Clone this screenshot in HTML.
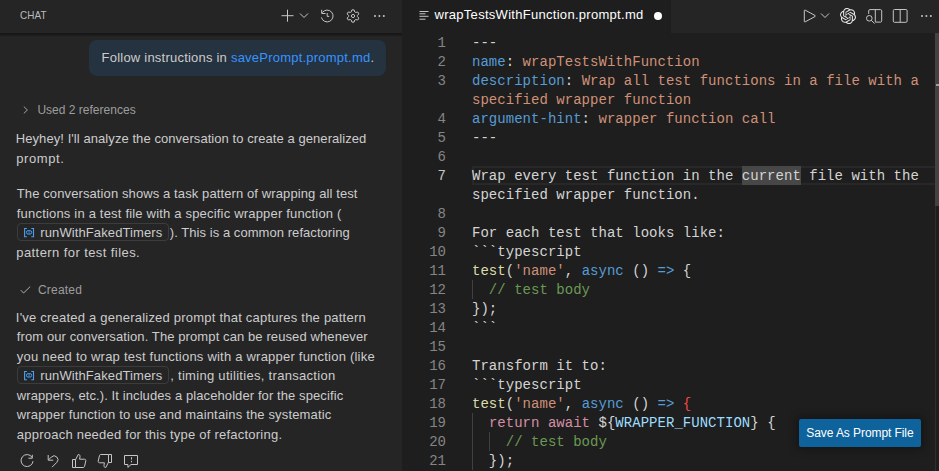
<!DOCTYPE html>
<html><head><meta charset="utf-8"><style>
*{margin:0;padding:0;box-sizing:border-box}
html,body{width:939px;height:471px;overflow:hidden;background:#1e1e1e}
.t{position:absolute;white-space:pre}
#chat{position:absolute;left:0;top:0;width:402px;height:471px;background:#252526}
#chatshadow{position:absolute;left:0;top:33px;width:402px;height:4px;background:linear-gradient(#161616 0%,#191919 45%,rgba(30,30,30,0) 100%)}
#bubble{position:absolute;left:89px;top:40px;width:297px;height:36px;border-radius:8px;background:#25323f}
.chip{position:absolute;left:17px;width:152px;height:18px;border:1px solid #3c3c3c;border-radius:4px}
.varicon{position:absolute}
#editor{position:absolute;left:402px;top:0;width:537px;height:471px;background:#1e1e1e}
#tabbar{position:absolute;left:402px;top:0;width:537px;height:33px;background:#252526}
#tab{position:absolute;left:402px;top:0;width:269px;height:33px;background:#1e1e1e}
#dot{position:absolute;left:653.5px;top:12px;width:8px;height:8px;border-radius:50%;background:#ffffff}
#curline{position:absolute;left:472px;top:166px;width:463px;height:19px;border:2px solid #282828;border-right:none}
#wordhl{position:absolute;left:742px;top:166px;width:59px;height:19px;background:#474747}
.guide{position:absolute;width:1px;background:#404040}
#ruler{position:absolute;left:935px;top:33px;width:1px;height:438px;background:#2e2e2e}
#rulermark{position:absolute;left:936px;top:84px;width:3px;height:2px;background:#a0a0a0}
#slider{position:absolute;left:935px;top:33px;width:4px;height:173px;background:#424242}
#btn{position:absolute;left:799px;top:419px;width:122px;height:28px;border-radius:2px;background:#0e639c;box-shadow:0 0 8px 2px rgba(0,0,0,.36)}
</style></head><body>
<div id="chat"></div>
<div id="chatshadow"></div>
<div class="t" style="left:20.20px;top:5.20px;font-size:11px;line-height:20px;color:#bbbbbb;letter-spacing:0.100px;font-family:'Liberation Sans', sans-serif;transform:scaleX(0.9);transform-origin:0 0;">CHAT</div>
<div id="bubble"></div>
<div class="t" id="t_follow" style="left:101.60px;top:47.50px;font-size:13px;line-height:20px;color:#cccccc;letter-spacing:0.219px;font-family:'Liberation Sans', sans-serif;">Follow instructions in <span style="color:#3794ff">savePrompt.prompt.md</span>.</div>
<div class="t" id="t_used" style="left:37.40px;top:100.20px;font-size:12px;line-height:20px;color:#9d9d9d;letter-spacing:0.012px;font-family:'Liberation Sans', sans-serif;">Used 2 references</div>
<div class="t" id="t_p1" style="left:15.80px;top:128.70px;font-size:13px;line-height:20px;color:#cccccc;letter-spacing:0.068px;font-family:'Liberation Sans', sans-serif;">Heyhey! I'll analyze the conversation to create a generalized</div>
<div class="t" id="t_p2" style="left:16.30px;top:148.70px;font-size:13px;line-height:20px;color:#cccccc;letter-spacing:0.567px;font-family:'Liberation Sans', sans-serif;">prompt.</div>
<div class="t" id="t_p3" style="left:16.80px;top:183.70px;font-size:13px;line-height:20px;color:#cccccc;letter-spacing:0.107px;font-family:'Liberation Sans', sans-serif;">The conversation shows a task pattern of wrapping all test</div>
<div class="t" id="t_p4" style="left:16.80px;top:203.70px;font-size:13px;line-height:20px;color:#cccccc;letter-spacing:0.190px;font-family:'Liberation Sans', sans-serif;">functions in a test file with a specific wrapper function (</div>
<div class="t" id="t_p5" style="left:16.30px;top:242.70px;font-size:13px;line-height:20px;color:#cccccc;letter-spacing:0.418px;font-family:'Liberation Sans', sans-serif;">pattern for test files.</div>
<div class="t" id="t_p6" style="left:15.80px;top:307.70px;font-size:13px;line-height:20px;color:#cccccc;letter-spacing:0.221px;font-family:'Liberation Sans', sans-serif;">I've created a generalized prompt that captures the pattern</div>
<div class="t" id="t_p7" style="left:16.80px;top:326.70px;font-size:13px;line-height:20px;color:#cccccc;letter-spacing:0.102px;font-family:'Liberation Sans', sans-serif;">from our conversation. The prompt can be reused whenever</div>
<div class="t" id="t_p8" style="left:16.80px;top:346.70px;font-size:13px;line-height:20px;color:#cccccc;letter-spacing:0.220px;font-family:'Liberation Sans', sans-serif;">you need to wrap test functions with a wrapper function (like</div>
<div class="t" id="t_p9" style="left:16.80px;top:385.70px;font-size:13px;line-height:20px;color:#cccccc;letter-spacing:0.095px;font-family:'Liberation Sans', sans-serif;">wrappers, etc.). It includes a placeholder for the specific</div>
<div class="t" id="t_p10" style="left:16.80px;top:404.70px;font-size:13px;line-height:20px;color:#cccccc;letter-spacing:0.159px;font-family:'Liberation Sans', sans-serif;">wrapper function to use and maintains the systematic</div>
<div class="t" id="t_p11" style="left:16.80px;top:424.70px;font-size:13px;line-height:20px;color:#cccccc;letter-spacing:0.230px;font-family:'Liberation Sans', sans-serif;">approach needed for this type of refactoring.</div>
<div class="chip" style="top:223px"></div>
<svg class="varicon" style="left:23px;top:227px" width="12" height="11" viewBox="0 0 12 11"><path d="M3.9 1.5H1.6v8.3h2.3M8.3 1.5h2.2v8.3H8.3" fill="none" stroke="#4a9ff5" stroke-width="1.1"/><rect x="3.4" y="3.6" width="5.3" height="3.5" rx="1.75" fill="none" stroke="#4a9ff5" stroke-width="1"/><path d="M6.05 4v2.7" stroke="#4a9ff5" stroke-width=".8"/></svg>
<div class="t" id="t_chip223" style="left:40.30px;top:222.70px;font-size:13px;line-height:20px;color:#cccccc;letter-spacing:0.106px;font-family:'Liberation Sans', sans-serif;">runWithFakedTimers</div>
<div class="t" id="t_after1" style="left:169.80px;top:222.70px;font-size:13px;line-height:20px;color:#cccccc;letter-spacing:0.057px;font-family:'Liberation Sans', sans-serif;">). This is a common refactoring</div>
<div class="chip" style="top:366px"></div>
<svg class="varicon" style="left:23px;top:370px" width="12" height="11" viewBox="0 0 12 11"><path d="M3.9 1.5H1.6v8.3h2.3M8.3 1.5h2.2v8.3H8.3" fill="none" stroke="#4a9ff5" stroke-width="1.1"/><rect x="3.4" y="3.6" width="5.3" height="3.5" rx="1.75" fill="none" stroke="#4a9ff5" stroke-width="1"/><path d="M6.05 4v2.7" stroke="#4a9ff5" stroke-width=".8"/></svg>
<div class="t" id="t_chip366" style="left:40.30px;top:365.70px;font-size:13px;line-height:20px;color:#cccccc;letter-spacing:0.106px;font-family:'Liberation Sans', sans-serif;">runWithFakedTimers</div>
<div class="t" id="t_after2" style="left:170.20px;top:365.70px;font-size:13px;line-height:20px;color:#cccccc;letter-spacing:0.297px;font-family:'Liberation Sans', sans-serif;">, timing utilities, transaction</div>
<svg style="position:absolute;left:20px;top:286px" width="11" height="8" viewBox="0 0 11 8"><path d="M.8 4.2L3.6 7 10.2 .6" fill="none" stroke="#b0b0b0" stroke-width="1"/></svg>
<div class="t" id="t_created" style="left:38.00px;top:280.20px;font-size:12px;line-height:20px;color:#9d9d9d;letter-spacing:0.200px;font-family:'Liberation Sans', sans-serif;">Created</div>
<svg style="position:absolute;left:23px;top:106px" width="6" height="8" viewBox="0 0 6 8"><path d="M.8 .6L4.4 4 .8 7.4" fill="none" stroke="#a0a0a0" stroke-width="1"/></svg>
<div id="editor"></div>
<div id="tabbar"></div>
<div id="tab"></div>
<div class="t" id="t_tabtitle" style="left:434.50px;top:5.30px;font-size:13px;line-height:20px;color:#ffffff;letter-spacing:0.287px;font-family:'Liberation Sans', sans-serif;">wrapTestsWithFunction.prompt.md</div>
<div id="dot"></div>
<div id="curline"></div>
<div id="wordhl"></div>
<div class="guide" style="left:472.0px;top:280px;height:19px"></div>
<div class="guide" style="left:472.0px;top:413px;height:57px"></div>
<div class="guide" style="left:488.9px;top:432px;height:19px"></div>
<div class="t" style="left:403.00px;top:33.00px;font-size:14px;line-height:20px;color:#858585;letter-spacing:0.000px;font-family:'Liberation Mono', monospace;width:43px;text-align:right;">1</div>
<div class="t" style="left:472.00px;top:33.00px;font-size:14px;line-height:20px;color:#d4d4d4;letter-spacing:0.030px;font-family:'Liberation Mono', monospace;"><span style="color:#d4d4d4">---</span></div>
<div class="t" style="left:403.00px;top:52.00px;font-size:14px;line-height:20px;color:#858585;letter-spacing:0.000px;font-family:'Liberation Mono', monospace;width:43px;text-align:right;">2</div>
<div class="t" style="left:472.00px;top:52.00px;font-size:14px;line-height:20px;color:#d4d4d4;letter-spacing:0.030px;font-family:'Liberation Mono', monospace;"><span style="color:#569cd6">name</span><span style="color:#d4d4d4">:</span><span style="color:#ce9178"> wrapTestsWithFunction</span></div>
<div class="t" style="left:403.00px;top:71.00px;font-size:14px;line-height:20px;color:#858585;letter-spacing:0.000px;font-family:'Liberation Mono', monospace;width:43px;text-align:right;">3</div>
<div class="t" style="left:472.00px;top:71.00px;font-size:14px;line-height:20px;color:#d4d4d4;letter-spacing:0.030px;font-family:'Liberation Mono', monospace;"><span style="color:#569cd6">description</span><span style="color:#d4d4d4">: </span><span style="color:#ce9178">Wrap all test functions in a file with a</span></div>
<div class="t" style="left:472.00px;top:90.00px;font-size:14px;line-height:20px;color:#d4d4d4;letter-spacing:0.030px;font-family:'Liberation Mono', monospace;"><span style="color:#ce9178">specified wrapper function</span></div>
<div class="t" style="left:403.00px;top:109.00px;font-size:14px;line-height:20px;color:#858585;letter-spacing:0.000px;font-family:'Liberation Mono', monospace;width:43px;text-align:right;">4</div>
<div class="t" style="left:472.00px;top:109.00px;font-size:14px;line-height:20px;color:#d4d4d4;letter-spacing:0.030px;font-family:'Liberation Mono', monospace;"><span style="color:#569cd6">argument-hint</span><span style="color:#d4d4d4">: </span><span style="color:#ce9178">wrapper function call</span></div>
<div class="t" style="left:403.00px;top:128.00px;font-size:14px;line-height:20px;color:#858585;letter-spacing:0.000px;font-family:'Liberation Mono', monospace;width:43px;text-align:right;">5</div>
<div class="t" style="left:472.00px;top:128.00px;font-size:14px;line-height:20px;color:#d4d4d4;letter-spacing:0.030px;font-family:'Liberation Mono', monospace;"><span style="color:#d4d4d4">---</span></div>
<div class="t" style="left:403.00px;top:147.00px;font-size:14px;line-height:20px;color:#858585;letter-spacing:0.000px;font-family:'Liberation Mono', monospace;width:43px;text-align:right;">6</div>
<div class="t" style="left:403.00px;top:166.00px;font-size:14px;line-height:20px;color:#c6c6c6;letter-spacing:0.000px;font-family:'Liberation Mono', monospace;width:43px;text-align:right;">7</div>
<div class="t" style="left:472.00px;top:166.00px;font-size:14px;line-height:20px;color:#d4d4d4;letter-spacing:0.030px;font-family:'Liberation Mono', monospace;"><span style="color:#d4d4d4">Wrap every test function in the current file with the</span></div>
<div class="t" style="left:472.00px;top:185.00px;font-size:14px;line-height:20px;color:#d4d4d4;letter-spacing:0.030px;font-family:'Liberation Mono', monospace;"><span style="color:#d4d4d4">specified wrapper function.</span></div>
<div class="t" style="left:403.00px;top:204.00px;font-size:14px;line-height:20px;color:#858585;letter-spacing:0.000px;font-family:'Liberation Mono', monospace;width:43px;text-align:right;">8</div>
<div class="t" style="left:403.00px;top:223.00px;font-size:14px;line-height:20px;color:#858585;letter-spacing:0.000px;font-family:'Liberation Mono', monospace;width:43px;text-align:right;">9</div>
<div class="t" style="left:472.00px;top:223.00px;font-size:14px;line-height:20px;color:#d4d4d4;letter-spacing:0.030px;font-family:'Liberation Mono', monospace;"><span style="color:#d4d4d4">For each test that looks like:</span></div>
<div class="t" style="left:403.00px;top:242.00px;font-size:14px;line-height:20px;color:#858585;letter-spacing:0.000px;font-family:'Liberation Mono', monospace;width:43px;text-align:right;">10</div>
<div class="t" style="left:472.00px;top:242.00px;font-size:14px;line-height:20px;color:#d4d4d4;letter-spacing:0.030px;font-family:'Liberation Mono', monospace;"><span style="color:#d4d4d4">```typescript</span></div>
<div class="t" style="left:403.00px;top:261.00px;font-size:14px;line-height:20px;color:#858585;letter-spacing:0.000px;font-family:'Liberation Mono', monospace;width:43px;text-align:right;">11</div>
<div class="t" style="left:472.00px;top:261.00px;font-size:14px;line-height:20px;color:#d4d4d4;letter-spacing:0.030px;font-family:'Liberation Mono', monospace;"><span style="color:#dcdcaa">test</span><span style="color:#d4d4d4">(</span><span style="color:#ce9178">'name'</span><span style="color:#d4d4d4">, </span><span style="color:#569cd6">async</span><span style="color:#d4d4d4"> () </span><span style="color:#569cd6">=&gt;</span><span style="color:#d4d4d4"> {</span></div>
<div class="t" style="left:403.00px;top:280.00px;font-size:14px;line-height:20px;color:#858585;letter-spacing:0.000px;font-family:'Liberation Mono', monospace;width:43px;text-align:right;">12</div>
<div class="t" style="left:472.00px;top:280.00px;font-size:14px;line-height:20px;color:#d4d4d4;letter-spacing:0.030px;font-family:'Liberation Mono', monospace;"><span style="color:#6a9955">  // test body</span></div>
<div class="t" style="left:403.00px;top:299.00px;font-size:14px;line-height:20px;color:#858585;letter-spacing:0.000px;font-family:'Liberation Mono', monospace;width:43px;text-align:right;">13</div>
<div class="t" style="left:472.00px;top:299.00px;font-size:14px;line-height:20px;color:#d4d4d4;letter-spacing:0.030px;font-family:'Liberation Mono', monospace;"><span style="color:#d4d4d4">});</span></div>
<div class="t" style="left:403.00px;top:318.00px;font-size:14px;line-height:20px;color:#858585;letter-spacing:0.000px;font-family:'Liberation Mono', monospace;width:43px;text-align:right;">14</div>
<div class="t" style="left:472.00px;top:318.00px;font-size:14px;line-height:20px;color:#d4d4d4;letter-spacing:0.030px;font-family:'Liberation Mono', monospace;"><span style="color:#d4d4d4">```</span></div>
<div class="t" style="left:403.00px;top:337.00px;font-size:14px;line-height:20px;color:#858585;letter-spacing:0.000px;font-family:'Liberation Mono', monospace;width:43px;text-align:right;">15</div>
<div class="t" style="left:403.00px;top:356.00px;font-size:14px;line-height:20px;color:#858585;letter-spacing:0.000px;font-family:'Liberation Mono', monospace;width:43px;text-align:right;">16</div>
<div class="t" style="left:472.00px;top:356.00px;font-size:14px;line-height:20px;color:#d4d4d4;letter-spacing:0.030px;font-family:'Liberation Mono', monospace;"><span style="color:#d4d4d4">Transform it to:</span></div>
<div class="t" style="left:403.00px;top:375.00px;font-size:14px;line-height:20px;color:#858585;letter-spacing:0.000px;font-family:'Liberation Mono', monospace;width:43px;text-align:right;">17</div>
<div class="t" style="left:472.00px;top:375.00px;font-size:14px;line-height:20px;color:#d4d4d4;letter-spacing:0.030px;font-family:'Liberation Mono', monospace;"><span style="color:#d4d4d4">```typescript</span></div>
<div class="t" style="left:403.00px;top:394.00px;font-size:14px;line-height:20px;color:#858585;letter-spacing:0.000px;font-family:'Liberation Mono', monospace;width:43px;text-align:right;">18</div>
<div class="t" style="left:472.00px;top:394.00px;font-size:14px;line-height:20px;color:#d4d4d4;letter-spacing:0.030px;font-family:'Liberation Mono', monospace;"><span style="color:#dcdcaa">test</span><span style="color:#d4d4d4">(</span><span style="color:#ce9178">'name'</span><span style="color:#d4d4d4">, </span><span style="color:#569cd6">async</span><span style="color:#d4d4d4"> () </span><span style="color:#569cd6">=&gt;</span><span style="color:#d4d4d4"> </span><span style="color:#f44747">{</span></div>
<div class="t" style="left:403.00px;top:413.00px;font-size:14px;line-height:20px;color:#858585;letter-spacing:0.000px;font-family:'Liberation Mono', monospace;width:43px;text-align:right;">19</div>
<div class="t" style="left:472.00px;top:413.00px;font-size:14px;line-height:20px;color:#d4d4d4;letter-spacing:0.030px;font-family:'Liberation Mono', monospace;"><span style="color:#d4d4d4">  </span><span style="color:#d48fa6">return await</span><span style="color:#d4d4d4"> ${</span><span style="color:#9cdcfe">WRAPPER_FUNCTION</span><span style="color:#d4d4d4">} {</span></div>
<div class="t" style="left:403.00px;top:432.00px;font-size:14px;line-height:20px;color:#858585;letter-spacing:0.000px;font-family:'Liberation Mono', monospace;width:43px;text-align:right;">20</div>
<div class="t" style="left:472.00px;top:432.00px;font-size:14px;line-height:20px;color:#d4d4d4;letter-spacing:0.030px;font-family:'Liberation Mono', monospace;"><span style="color:#6a9955">    // test body</span></div>
<div class="t" style="left:403.00px;top:451.00px;font-size:14px;line-height:20px;color:#858585;letter-spacing:0.000px;font-family:'Liberation Mono', monospace;width:43px;text-align:right;">21</div>
<div class="t" style="left:472.00px;top:451.00px;font-size:14px;line-height:20px;color:#d4d4d4;letter-spacing:0.030px;font-family:'Liberation Mono', monospace;"><span style="color:#d4d4d4">  });</span></div>
<div id="ruler"></div>
<div id="slider"></div>
<div id="rulermark"></div>
<div id="btn"></div>
<div class="t" id="t_btn" style="left:806.30px;top:423.20px;font-size:12px;line-height:20px;color:#ffffff;letter-spacing:-0.078px;font-family:'Liberation Sans', sans-serif;">Save As Prompt File</div>
<svg style="position:absolute;left:280px;top:8px" width="16" height="16" viewBox="0 0 16 16"><path d="M7.5 1.7v12M1.5 7.7h12" fill="none" stroke="#c5c5c5" stroke-width="1"/></svg>
<svg style="position:absolute;left:299px;top:12px" width="10" height="7" viewBox="0 0 10 7"><path d="M1 1.5l4 4 4-4" fill="none" stroke="#c5c5c5" stroke-width="1"/></svg>
<svg style="position:absolute;left:319px;top:8px" width="16" height="16" viewBox="0 0 16 16"><path d="M3.3 4.6A5.9 5.9 0 1 1 2.4 9.4" fill="none" stroke="#c5c5c5" stroke-width="1"/><path d="M2.7 1.8v3.7h3.8" fill="none" stroke="#c5c5c5" stroke-width="1"/><path d="M8.2 5v3.4h2" fill="none" stroke="#c5c5c5" stroke-width="1"/></svg>
<svg style="position:absolute;left:345px;top:8px" width="16" height="16" viewBox="0 0 16 16"><path d="M6.92 1.89 L9.08 1.89 L9.79 3.98 L10.59 4.44 L12.75 4.01 L13.83 5.88 L12.38 7.54 L12.38 8.46 L13.83 10.12 L12.75 11.99 L10.59 11.56 L9.79 12.02 L9.08 14.11 L6.92 14.11 L6.21 12.02 L5.41 11.56 L3.25 11.99 L2.17 10.12 L3.62 8.46 L3.62 7.54 L2.17 5.88 L3.25 4.01 L5.41 4.44 L6.21 3.98Z" fill="none" stroke="#c5c5c5" stroke-width="1" stroke-linejoin="round"/><circle cx="8" cy="8" r="1.6" fill="none" stroke="#c5c5c5" stroke-width="1"/></svg>
<svg style="position:absolute;left:372px;top:8px" width="16" height="16" viewBox="0 0 16 16"><circle cx="3" cy="8" r="1" fill="#c5c5c5"/><circle cx="7.4" cy="8" r="1" fill="#c5c5c5"/><circle cx="11.8" cy="8" r="1" fill="#c5c5c5"/></svg>
<svg style="position:absolute;left:19px;top:453px" width="16" height="16" viewBox="0 0 16 16"><path d="M13 4.2A6 6 0 1 0 14 8.2" fill="none" stroke="#c5c5c5" stroke-width="1"/><path d="M13.3 1.8v3.4H9.4" fill="none" stroke="#c5c5c5" stroke-width="1"/></svg>
<svg style="position:absolute;left:46px;top:453px" width="16" height="16" viewBox="0 0 16 16"><path d="M2.2 2v5.2h5" fill="none" stroke="#c5c5c5" stroke-width="1"/><path d="M2.6 6.8L5.4 4A3.8 3.8 0 0 1 10.8 9.4L6 14.2" fill="none" stroke="#c5c5c5" stroke-width="1"/></svg>
<svg style="position:absolute;left:71px;top:453px" width="16" height="16" viewBox="0 0 16 16"><path d="M1.5 6.5h3v8h-3z" fill="none" stroke="#c5c5c5" stroke-width="1"/><path d="M4.5 6.8L7.2 1.5c1.5 0 2 1 1.8 2.3L8.6 6.2h4.8c1 0 1.6.8 1.4 1.7l-1.3 5.6c-.2.6-.6 1-1.2 1H4.5" fill="none" stroke="#c5c5c5" stroke-width="1" stroke-linejoin="round"/></svg>
<svg style="position:absolute;left:97px;top:453px" width="16" height="16" viewBox="0 0 16 16"><path d="M11.5 1.5h3v8h-3z" fill="none" stroke="#c5c5c5" stroke-width="1"/><path d="M11.5 9.2L8.8 14.5c-1.5 0-2-1-1.8-2.3L7.4 9.8H2.6c-1 0-1.6-.8-1.4-1.7l1.3-5.6c.2-.6.6-1 1.2-1h7.8" fill="none" stroke="#c5c5c5" stroke-width="1" stroke-linejoin="round"/></svg>
<svg style="position:absolute;left:123px;top:453px" width="16" height="16" viewBox="0 0 16 16"><path d="M1.5 2.5h13v9H8L4.9 14.4v-2.9H1.5z" fill="none" stroke="#c5c5c5" stroke-width="1" stroke-linejoin="round"/><path d="M8.5 4.2v2.3M8.5 7.8v1.5" fill="none" stroke="#c5c5c5" stroke-width="1"/></svg>
<svg style="position:absolute;left:418px;top:8px" width="12" height="14" viewBox="0 0 12 14"><path d="M1.5 3.5h9M1.5 5.8h6M1.5 8.3h9M1.5 11.2h6" fill="none" stroke="#c5c5c5" stroke-width="1"/></svg>
<svg style="position:absolute;left:802px;top:8px" width="16" height="16" viewBox="0 0 16 16"><path d="M2.3 2.6c0-.5.4-.7.8-.5l10 5.4c.4.3.4.7 0 1l-10 5.4c-.4.2-.8 0-.8-.5z" fill="none" stroke="#c5c5c5" stroke-width="1" stroke-linejoin="round"/></svg>
<svg style="position:absolute;left:820px;top:12px" width="10" height="7" viewBox="0 0 10 7"><path d="M1 1.5l4 4 4-4" fill="none" stroke="#c5c5c5" stroke-width="1"/></svg>
<svg style="position:absolute;left:840px;top:8px" width="16" height="16" viewBox="0 0 24 24"><path fill="#e8e8e8" d="M22.2819 9.8211a5.9847 5.9847 0 0 0-.5157-4.9108 6.0462 6.0462 0 0 0-6.5098-2.9A6.0651 6.0651 0 0 0 4.9807 4.1818a5.9847 5.9847 0 0 0-3.9977 2.9 6.0462 6.0462 0 0 0 .7427 7.0966 5.98 5.98 0 0 0 .511 4.9107 6.051 6.051 0 0 0 6.5146 2.9001A5.9847 5.9847 0 0 0 13.2599 24a6.0557 6.0557 0 0 0 5.7718-4.2058 5.9894 5.9894 0 0 0 3.9977-2.9001 6.0557 6.0557 0 0 0-.7475-7.0729zm-9.022 12.6081a4.4755 4.4755 0 0 1-2.8764-1.0408l.1419-.0804 4.7783-2.7582a.7948.7948 0 0 0 .3927-.6813v-6.7369l2.02 1.1686a.071.071 0 0 1 .038.052v5.5826a4.504 4.504 0 0 1-4.4945 4.4944zm-9.6607-4.1254a4.4708 4.4708 0 0 1-.5346-3.0137l.142.0852 4.783 2.7582a.7712.7712 0 0 0 .7806 0l5.8428-3.3685v2.3324a.0804.0804 0 0 1-.0332.0615L9.74 19.9502a4.4992 4.4992 0 0 1-6.1408-1.6464zM2.3408 7.8956a4.485 4.485 0 0 1 2.3655-1.9728V11.6a.7664.7664 0 0 0 .3879.6765l5.8144 3.3543-2.0201 1.1685a.0757.0757 0 0 1-.071 0l-4.8303-2.7865A4.504 4.504 0 0 1 2.3408 7.872zm16.5963 3.8558L13.1038 8.364 15.1192 7.2a.0757.0757 0 0 1 .071 0l4.8303 2.7913a4.4944 4.4944 0 0 1-.6765 8.1042v-5.6772a.79.79 0 0 0-.407-.667zm2.0107-3.0231l-.142-.0852-4.7735-2.7818a.7759.7759 0 0 0-.7854 0L9.409 9.2297V6.8974a.0662.0662 0 0 1 .0284-.0615l4.8303-2.7866a4.4992 4.4992 0 0 1 6.6802 4.66zM8.3065 12.863l-2.02-1.1638a.0804.0804 0 0 1-.038-.0567V6.0742a4.4992 4.4992 0 0 1 7.3757-3.4537l-.142.0805L8.704 5.459a.7948.7948 0 0 0-.3927.6813zm1.0976-2.3654l2.602-1.4998 2.6069 1.4998v2.9994l-2.5974 1.4997-2.6067-1.4997Z"/></svg>
<svg style="position:absolute;left:866px;top:8px" width="18" height="18" viewBox="0 0 18 18"><path d="M2.7 5.9V2.8c0-.7.5-1.2 1.2-1.2h10.6c.7 0 1.2.5 1.2 1.2v10.1c0 .7-.5 1.2-1.2 1.2H9.3" fill="none" stroke="#c5c5c5" stroke-width="1"/><path d="M9.3 1.6v12.5" fill="none" stroke="#c5c5c5" stroke-width="1"/><circle cx="3.3" cy="10.3" r="2.8" fill="none" stroke="#c5c5c5" stroke-width="1"/><path d="M5.3 12.3l3.2 3.3" fill="none" stroke="#c5c5c5" stroke-width="1"/></svg>
<svg style="position:absolute;left:891px;top:8px" width="18" height="17" viewBox="0 0 18 17"><rect x="2.3" y="1.5" width="13.8" height="12.8" rx="1.2" fill="none" stroke="#c5c5c5" stroke-width="1"/><path d="M9.2 1.5v12.8" fill="none" stroke="#c5c5c5" stroke-width="1"/></svg>
<svg style="position:absolute;left:918px;top:8px" width="16" height="16" viewBox="0 0 16 16"><circle cx="4" cy="8" r="1" fill="#c5c5c5"/><circle cx="8.4" cy="8" r="1" fill="#c5c5c5"/><circle cx="12.8" cy="8" r="1" fill="#c5c5c5"/></svg>
</body></html>
